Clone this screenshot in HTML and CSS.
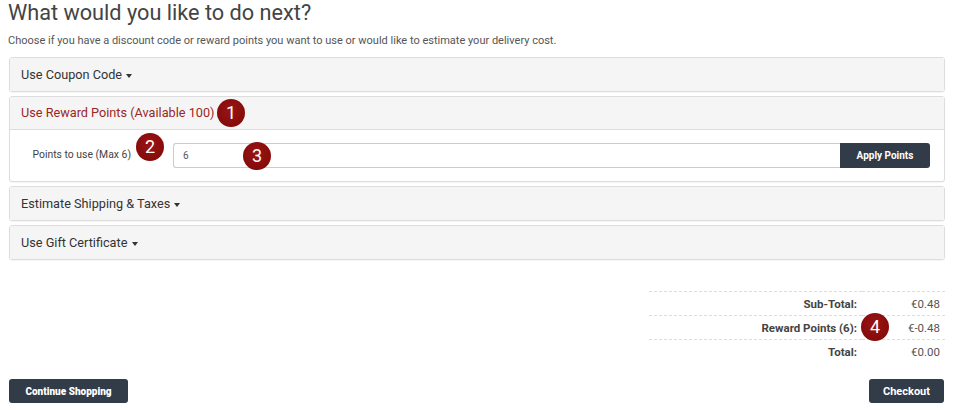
FILE: index.html
```html
<!DOCTYPE html>
<html lang="en">
<head>
    <meta charset="UTF-8">
    <meta name="viewport" content="width=device-width, initial-scale=1.0">
    <title>Shopping Cart</title>
    <link rel="stylesheet" href="styles.css">
</head>
<body>
    <h2 class="title">What would you like to do next?</h2>
    <p class="lead">Choose if you have a discount code or reward points you want to use or would like to estimate your delivery cost.</p>

    <div class="panels">
        <div class="panel">
            <div class="panel-heading">Use Coupon Code <span class="caret"></span></div>
        </div>

        <div class="panel">
            <div class="panel-heading active">Use Reward Points (Available 100)</div>
            <div class="panel-body">
                <label class="field-label" for="reward">Points to use (Max 6)</label>
                <div class="input-group">
                    <input type="text" id="reward" value="6">
                    <button class="btn">Apply Points</button>
                </div>
            </div>
        </div>

        <div class="panel">
            <div class="panel-heading">Estimate Shipping &amp; Taxes <span class="caret"></span></div>
        </div>

        <div class="panel">
            <div class="panel-heading">Use Gift Certificate <span class="caret"></span></div>
        </div>
    </div>

    <div class="totals-wrap">
        <table class="totals">
            <tr>
                <td class="label">Sub-Total:</td>
                <td class="value">€0.48</td>
            </tr>
            <tr>
                <td class="label">Reward Points (6):</td>
                <td class="value">€-0.48</td>
            </tr>
            <tr>
                <td class="label">Total:</td>
                <td class="value">€0.00</td>
            </tr>
        </table>
    </div>

    <div class="buttons">
        <button class="btn btn-continue">Continue Shopping</button>
        <button class="btn btn-checkout">Checkout</button>
    </div>

    <!-- numbered callouts -->
    <span class="badge" style="left: 217px; top: 99px;">1</span>
    <span class="badge" style="left: 136px; top: 133px;">2</span>
    <span class="badge" style="left: 243px; top: 142px;">3</span>
    <span class="badge" style="left: 861px; top: 313px;">4</span>
</body>
</html>
```

FILE: styles.css
```css
body {
    font-family: Roboto, "Liberation Sans", Arial, sans-serif;
    color: #333;
    background-color: #fff;
    margin: 0;
    padding: 0 8px;
    width: 949px;
}
.title {
    font-size: 21.7px;
    font-weight: 400;
    color: #444;
    margin: 0;
    line-height: 26px;
}
.lead {
    font-size: 11px;
    color: #555;
    margin: 8px 0 9px;
    line-height: 14px;
}
.panels {
    margin: 0 12px 0 1px;
}
.panel {
    border: 1px solid #ddd;
    border-radius: 3px;
    background-color: #fff;
    margin-bottom: 4px;
    box-shadow: 0 1px 1px rgba(0, 0, 0, 0.04);
}
.panel-heading {
    background-color: #f5f5f5;
    padding: 0 11px;
    height: 33px;
    line-height: 33px;
    font-size: 12.7px;
    color: #333;
}
.panel-heading.active {
    color: #9b2626;
    border-bottom: 1px solid #ddd;
    height: 32px;
    line-height: 32px;
}
.caret {
    display: inline-block;
    width: 0;
    height: 0;
    margin-left: 1px;
    vertical-align: middle;
    border-top: 4px solid #333;
    border-left: 3px solid transparent;
    border-right: 3px solid transparent;
}
.panel-body {
    display: flex;
    align-items: flex-start;
    padding: 13px 14px 13px 14px;
}
.field-label {
    width: 107px;
    text-align: right;
    font-size: 10.4px;
    color: #444;
    padding-top: 5px;
    margin-right: 42px;
    white-space: nowrap;
}
.input-group {
    flex: 1;
    display: flex;
}
input {
    flex: 1;
    height: 25px;
    box-sizing: border-box;
    border: 1px solid #ccc;
    border-right: none;
    border-radius: 3px 0 0 3px;
    padding: 0 9px;
    font-family: inherit;
    font-size: 10px;
    color: #555;
}
.btn {
    background-color: #323b48;
    color: #fff;
    border: none;
    border-radius: 3px;
    font-family: inherit;
    font-weight: 700;
    cursor: pointer;
    height: 24px;
    padding: 0;
}
.input-group .btn {
    width: 90px;
    height: 25px;
    border-radius: 0 3px 3px 0;
    font-size: 10px;
}
.totals-wrap {
    display: flex;
    justify-content: flex-end;
    margin: 31px 12px 0 0;
}
.totals {
    width: 296px;
    border-collapse: collapse;
    font-size: 11.5px;
}
.totals td {
    height: 23px;
    padding: 0;
    border-top: 1px dashed #ddd;
}
.totals tr:last-child td {
    height: 24px;
}
.totals .label {
    text-align: right;
    font-weight: 700;
    color: #444;
    padding-right: 5px;
}
.totals .value {
    text-align: right;
    width: 78px;
    color: #555;
    padding-right: 5px;
}
.buttons {
    display: flex;
    justify-content: space-between;
    margin: 15px 13px 0 1px;
}
.btn-continue {
    width: 119px;
    font-size: 10px;
    font-weight: 900;
}
.btn-checkout {
    width: 75px;
    font-size: 11px;
}
.badge {
    position: absolute;
    width: 28px;
    height: 28px;
    border-radius: 50%;
    background: radial-gradient(circle at 50% 40%, #9a1414, #7d0808);
    color: #fff;
    font-size: 18px;
    line-height: 28px;
    text-align: center;
}
```
